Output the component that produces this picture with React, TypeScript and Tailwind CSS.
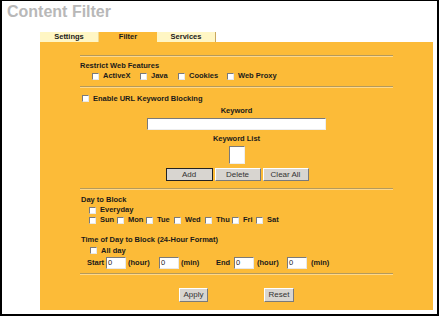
import React from 'react';

const font = { fontFamily: '"Liberation Sans", Arial, sans-serif' };

const Check = () => (
    <span className="inline-block w-[7px] h-[7px] shrink-0 bg-white border border-t-[#7a7a7a] border-l-[#7a7a7a] border-b-[#e8e8e8] border-r-[#e8e8e8]" />
);

const CheckItem = ({ label, w }: { label: string; w?: string }) => (
    <div className={`flex items-center gap-[4px] shrink-0 ${w ?? ''}`}>
        <Check />
        <span className="whitespace-nowrap">{label}</span>
    </div>
);

const Rule = ({ mt }: { mt: string }) => (
    <div className={`${mt} h-[2px] border-t border-t-[#b49a5c] border-b border-b-[#ffd88a]`} />
);

const Btn = ({ label, w, strong }: { label: string; w: string; strong?: boolean }) => (
    <div className={`${w} h-full flex items-center justify-center bg-[#d8d5d0] text-[8px] font-normal text-[#333] border ${strong ? 'border-[#222]' : 'border-t-white border-l-white border-b-[#7a7a7a] border-r-[#7a7a7a]'}`}>
        {label}
    </div>
);

const TimeBox = () => (
    <div className="w-[20px] h-[12px] shrink-0 bg-white border border-t-[#7a7a7a] border-l-[#7a7a7a] border-b-[#e8e8e8] border-r-[#e8e8e8] text-[7.5px] font-normal leading-[10px] pl-[1px]">0</div>
);

export default function App() {
    return (
        <div className="w-[440px] h-[317px] bg-white" style={font}>
            <div className="w-[439px] h-[316px] border-black border-t border-l-2 border-r-2 border-b-2 bg-white">
                <div className="h-[31px] pt-[3px] pl-[5px] text-[16px] leading-[16px] font-bold text-[#b8b8b8]">Content Filter</div>
                <div className="ml-[38px] flex h-[10px] text-[7.5px] leading-[10px] font-bold text-[#1a1a1a]">
                    <div className="w-[59px] text-center bg-[#fff6c4] border-r border-[#f0d890]">Settings</div>
                    <div className="w-[58px] text-center bg-[#fcbb38]">Filter</div>
                    <div className="w-[59px] text-center bg-[#fff6c4] border-r border-[#c9a860]">Services</div>
                </div>
                <div className="ml-[38px] w-[393px] h-[268px] bg-[#fcbb38] text-[7.5px] font-bold text-[#1a1a1a]">
                    <div className="ml-[40px] w-[313px] flex flex-col pt-[13px]">
                        <Rule mt="mt-0" />
                        <div className="mt-[3px] h-[11px] leading-[11px]">Restrict Web Features</div>
                        <div className="h-[10px] flex items-center pl-[12px]">
                            <CheckItem label="ActiveX" w="w-[48px]" />
                            <CheckItem label="Java" w="w-[38px]" />
                            <CheckItem label="Cookies" w="w-[49px]" />
                            <CheckItem label="Web Proxy" />
                        </div>
                        <Rule mt="mt-[5px]" />
                        <div className="mt-[5px] h-[11px] flex items-center pl-[2px]">
                            <CheckItem label="Enable URL Keyword Blocking" />
                        </div>
                        <div className="mt-[1px] h-[11px] leading-[11px] text-center">Keyword</div>
                        <div className="mt-[2px] mx-auto w-[179px] h-[12px] bg-white border border-t-[#7a7a7a] border-l-[#7a7a7a] border-b-[#eee] border-r-[#eee]" />
                        <div className="mt-[4px] h-[10px] leading-[10px] text-center">Keyword List</div>
                        <div className="mt-[2px] mx-auto w-[16px] h-[18px] bg-white border border-t-[#7a7a7a] border-l-[#7a7a7a] border-b-[#eee] border-r-[#eee]" />
                        <div className="mt-[4px] h-[13px] flex justify-center gap-[2px] pl-[1px]">
                            <Btn label="Add" w="w-[47px]" strong />
                            <Btn label="Delete" w="w-[46px]" />
                            <Btn label="Clear All" w="w-[46px]" />
                        </div>
                        <Rule mt="mt-[7px]" />
                        <div className="mt-[4px] h-[11px] leading-[11px] pl-[1px]">Day to Block</div>
                        <div className="h-[10px] flex items-center pl-[9px]">
                            <CheckItem label="Everyday" />
                        </div>
                        <div className="h-[10px] flex items-center pl-[9px]">
                            <CheckItem label="Sun" w="w-[28px]" />
                            <CheckItem label="Mon" w="w-[29px]" />
                            <CheckItem label="Tue" w="w-[28px]" />
                            <CheckItem label="Wed" w="w-[31px]" />
                            <CheckItem label="Thu" w="w-[27px]" />
                            <CheckItem label="Fri" w="w-[24px]" />
                            <CheckItem label="Sat" />
                        </div>
                        <div className="mt-[9px] h-[11px] leading-[11px] pl-[1px]">Time of Day to Block (24-Hour Format)</div>
                        <div className="h-[11px] flex items-center pl-[10px]">
                            <CheckItem label="All day" />
                        </div>
                        <div className="mt-[1px] h-[12px] flex items-center pl-[7px]">
                            <span className="w-[19px] shrink-0">Start</span>
                            <TimeBox />
                            <span className="w-[33px] shrink-0 pl-[2px]">(hour)</span>
                            <TimeBox />
                            <span className="w-[37px] shrink-0 pl-[2px]">(min)</span>
                            <span className="w-[18px] shrink-0">End</span>
                            <TimeBox />
                            <span className="w-[33px] shrink-0 pl-[3px]">(hour)</span>
                            <TimeBox />
                            <span className="shrink-0 pl-[4px]">(min)</span>
                        </div>
                        <Rule mt="mt-[4px]" />
                        <div className="mt-[13px] h-[14px] flex">
                            <div className="ml-[99px]"><Btn label="Apply" w="w-[29px]" /></div>
                            <div className="ml-[56px]"><Btn label="Reset" w="w-[30px]" /></div>
                        </div>
                    </div>
                </div>
            </div>
        </div>
    );
}
